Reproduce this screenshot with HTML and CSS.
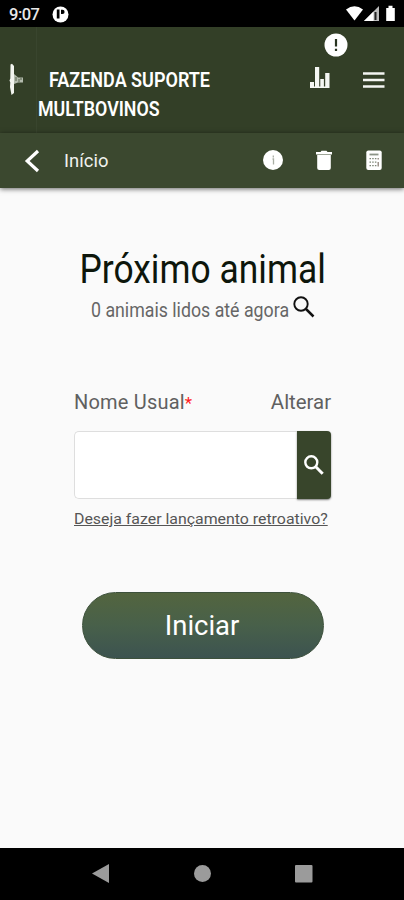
FILE: index.html
```html
<!DOCTYPE html>
<html lang="pt-BR">
<head>
<meta charset="utf-8">
<title>Próximo animal</title>
<link rel="stylesheet" href="styles.css">
</head>
<body>
<div class="status">
  <span class="clock">9:07</span>
  <svg class="app-dot" width="17" height="17" viewBox="0 0 17 17"><circle cx="8.500" cy="8.500" r="8" fill="#fff"/><path d="M4.800 3.500h2.700v9H4.800zM9 3.800h1.500a2 2 0 0 1 0 4.200H9z" fill="#000"/></svg>
  <svg class="signals" width="54" height="18" viewBox="0 0 54 18"><path d="M1 4.500Q9.500-2 18 4.500L9.500 15.500Z" fill="#fff"/><path d="M19 16 34 1V16Z" fill="#bbb"/><path d="M19 16 28.500 6.500V16Z" fill="#fff"/><path d="M29.500 7h2v8h-2z" fill="#222"/><path d="M41.200 3h2.300V.8h4V3h2.300v13h-8.600z" fill="#fff"/></svg>
</div>
<header class="header">
  <div class="brand"><svg width="16" height="34" viewBox="0 0 16 34"><path d="M2.500 1.500 4 .8 6 3v27l-2.500 2-1.500-8 .3-4.500-.8-2 .8-2z" fill="#f2f4ef"/><path d="M6 11l3 2.500 1 1h5v5h-5L6 21z" fill="#b3bbad"/><path d="M8 14v4M11 16v3M13 15v2" stroke="#56624b"/></svg></div>
  <h1 class="farm"><span class="farm-a">FAZENDA SUPORTE</span><br><span class="farm-b">MULTBOVINOS</span></h1>
  <div class="head-icons">
    <svg width="20" height="22" viewBox="0 0 20 22" fill="#f4f6f2"><path d="M0 15h4v6H0zM5 0h4.200v21H5zM10.300 12h3.600v9h-3.600zM15.200 6h4.300v15h-4.300zM0 19.500h19.500V21H0z"/></svg>
    <svg width="22" height="16" viewBox="0 0 22 16" stroke="#f4f6f2" stroke-width="2.300"><path d="M0 1.500h21.500M0 8h21.500M0 14.500h21.500"/></svg>
    <svg class="alert" width="24" height="24" viewBox="0 0 24 24"><circle cx="12" cy="12" r="11.500" fill="#fff"/><path d="M12 6v7.500M12 15.800v2.200" stroke="#283320" stroke-width="2.200"/></svg>
  </div>
</header>
<nav class="toolbar">
  <svg class="back" width="16" height="24" viewBox="0 0 16 24"><path d="M14 2 3.200 12 14 22" fill="none" stroke="#fff" stroke-width="3.200"/></svg>
  <span class="crumb">Início</span>
  <div class="tools">
    <svg width="20" height="22" viewBox="0 0 20 22"><circle cx="10" cy="10" r="10" fill="#fff"/><path d="M10.300 5.500v2M9.500 9h1v5.500" stroke="#a9aea4" stroke-width="1.300" fill="none"/></svg>
    <svg width="16" height="22" viewBox="0 0 16 22" fill="#fff"><path d="M0 2h4.500L5.500.8h5l1 1.200H16v2.500H0zM1.200 5h13.600v13a2 2 0 0 1-2 2H3.200a2 2 0 0 1-2-2z"/></svg>
    <svg width="16" height="22" viewBox="0 0 16 22"><rect x=".3" y=".5" width="15.400" height="19.500" rx="2" fill="#fff"/><path d="M3.500 4.500h9" stroke="#8c9487" stroke-width="1.800"/><path d="M3.500 8.700h7M3.500 12.200h7M3.500 15.700h7" stroke="#7e8777" stroke-width="1.300" stroke-dasharray="1.500 1.200"/><path d="M12.200 8v1.500M12.200 12v4.500" stroke="#8c8077" stroke-width="1.300"/></svg>
  </div>
</nav>
<main class="main">
  <h2 class="title"><span>Próximo animal</span></h2>
  <div class="count"><span class="count-text">0 animais lidos até agora</span><svg width="22" height="22" viewBox="0 0 22 22" fill="none" stroke="#111"><circle cx="8" cy="8" r="6.700" stroke-width="1.900"/><path d="M13 13l7.500 7.500" stroke-width="2.500"/></svg></div>
  <section class="form">
    <div class="labels"><label class="name" for="usual"><span class="name-text">Nome Usual</span><span class="req">*</span></label><span class="change">Alterar</span></div>
    <div class="field"><input id="usual" type="text"><button class="search" aria-label="Buscar"><svg width="20" height="20" viewBox="0 0 20 20" fill="none" stroke="#fff"><circle cx="7.300" cy="7.300" r="6" stroke-width="2.400"/><path d="M12 12l6.700 6.700" stroke-width="3"/></svg></button></div>
    <a class="retro"><span>Deseja fazer lançamento retroativo?</span></a>
  </section>
  <button class="start"><span>Iniciar</span></button>
</main>
<footer class="sysnav"><svg width="404" height="52" viewBox="0 0 404 52" fill="#9b9b9b"><path d="M92 25.500 109 16v19z"/><circle cx="202.500" cy="25.500" r="8.500"/><rect x="295" y="17" width="17.500" height="17.500" rx="1"/></svg></footer>
</body>
</html>
```
FILE: styles.css
```css
* { box-sizing: border-box; }
body { margin: 0; width: 404px; height: 900px; display: flex; flex-direction: column; overflow: hidden; background: #fafafa; font-family: Roboto, sans-serif; }
svg { display: block; flex: none; }
span { white-space: nowrap; }
button { border: 0; padding: 0; font-family: inherit; }
.status { height: 27px; flex: none; background: #000; color: #e8e8e8; display: flex; align-items: center; padding: 1px 7px 0 9px; }
.clock { font-size: 16.500px; width: 43px; font-weight: 500; letter-spacing: -.5px; }
.signals { margin-left: auto; margin-right: -2px; }
.header { height: 106px; flex: none; background: #333f27; display: flex; color: #fff; }
.brand { width: 37px; padding: 36px 0 0 8px; border-right: 1px solid #39452e; }
.farm { margin: 0; padding: 39px 0 0 1px; font-size: 20px; line-height: 29px; font-weight: 600; width: 190px; }
.farm-a, .farm-b, .crumb, .title span, .count-text, .change, .retro span, .start span { display: inline-block; transform-origin: left center; }
.farm-a { margin-left: 11px; transform: scaleX(.9); }
.farm-b { transform: scaleX(.89); }
.head-icons { margin-left: auto; position: relative; display: flex; gap: 33px; padding: 40px 19px 0 0; }
.head-icons svg:nth-child(2) { margin-top: 5px; }
.alert { position: absolute; left: 14px; top: 6px; }
.toolbar { height: 55px; flex: none; background: #3b482f; display: flex; align-items: center; color: #f0f2ee; padding: 0 22px 0 24px; box-shadow: 0 1px 5px rgba(0,0,0,.6); }
.crumb { font-size: 19px; margin-left: 24px; transform: scaleX(.97); }
.tools { margin-left: auto; display: flex; gap: 34px; }
.tools svg:first-child { margin-right: -1px; }
.main { flex: 1; display: flex; flex-direction: column; align-items: center; padding-top: 58px; }
.title { margin: 0; width: 246px; font-size: 40px; line-height: 48px; font-weight: 400; color: #0d160b; }
.title span { transform: translateX(.5px) scaleX(.885); }
.count { width: 224px; height: 28px; margin-top: 2px; font-size: 20px; line-height: 28px; color: #666; display: flex; justify-content: space-between; }
.count-text { width: 198px; transform: translateX(1px) scaleX(.888); }
.count svg { margin-right: -1px; }
.form { width: 258px; margin-top: 69px; font-size: 20px; color: #606060; }
.labels { display: flex; justify-content: space-between; line-height: 24px; height: 24px; margin-top: -3px; padding-left: 1px; }
.name { display: flex; }
.name-text { letter-spacing: .2px; }
.req { color: #f22; font-size: 17px; line-height: 27px; }
.change { transform: scaleX(1.02); transform-origin: right center; }
.field { display: flex; height: 68px; margin-top: 17px; margin-left: 1px; }
.field input { width: 223px; height: 68px; border: 1px solid #dedede; border-right: 0; border-radius: 5px 0 0 5px; background: #fff; padding: 0 10px; }
.search { width: 34px; background: #38452b; border-radius: 0 4px 4px 0; display: flex; align-items: center; justify-content: center; box-shadow: 0 1px 2px rgba(0,0,0,.5); }
.retro { display: block; height: 20px; line-height: 20px; margin-top: 10px; margin-left: 1px; font-size: 15.500px; color: #555; }
.retro span { text-decoration: underline; transform: scaleX(1.024); }
.start { width: 242px; height: 67px; margin-top: 63px; margin-left: 1px; border: 1px solid #3d513c; border-radius: 34px; background: linear-gradient(#53653f, #48604a 50%, #3c5350); color: #fff; font-size: 28px; }
.start span { transform: scaleX(.98); transform-origin: center; }
.sysnav { height: 52px; flex: none; background: #000; }
```
